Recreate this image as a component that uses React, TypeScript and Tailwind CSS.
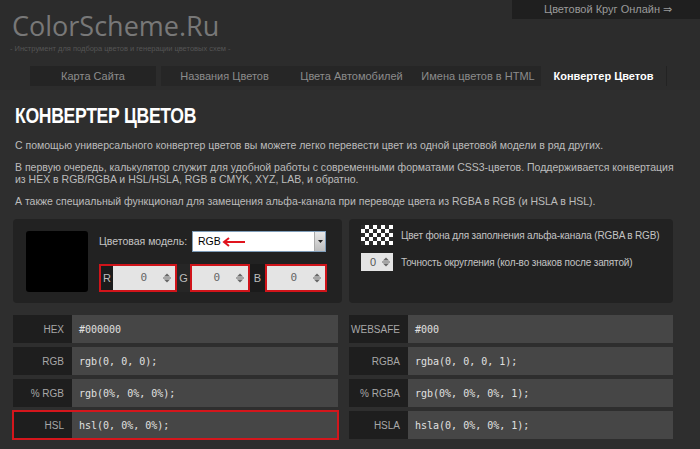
import React from "react";

const Spinner = () => (
  <svg width="8" height="10" viewBox="0 0 8 10" className="shrink-0">
    <path d="M1 3.5 L4 0.5 L7 3.5 Z" fill="#666" />
    <rect x="0" y="4.5" width="8" height="1" fill="#666" />
    <path d="M1 6.5 L4 9.5 L7 6.5 Z" fill="#666" />
  </svg>
);

const NumInput = ({ w = "w-[60px]" }: { w?: string }) => (
  <div className={`${w} h-full bg-[#e4e4e4] flex items-center justify-end pr-[4px] gap-[16px]`}>
    <span className="font-['DejaVu_Sans_Mono',monospace] text-[11px] text-[#666]">0</span>
    <Spinner />
  </div>
);

const rowsLeft = [
  { label: "HEX", value: "#000000" },
  { label: "RGB", value: "rgb(0, 0, 0);" },
  { label: "% RGB", value: "rgb(0%, 0%, 0%);" },
  { label: "HSL", value: "hsl(0, 0%, 0%);", marked: true },
];

const rowsRight = [
  { label: "WEBSAFE", value: "#000" },
  { label: "RGBA", value: "rgba(0, 0, 0, 1);" },
  { label: "% RGBA", value: "rgb(0%, 0%, 0%, 1);" },
  { label: "HSLA", value: "hsla(0, 0%, 0%, 1);" },
];

const ValueRow = ({ label, value, marked }: { label: string; value: string; marked?: boolean }) => (
  <div
    className={`flex h-[28px] ${marked ? "outline-2 outline-[#d4161c] -outline-offset-1" : ""}`}
  >
    <div className="w-[59px] bg-[#1e1e1e] flex items-center justify-end pr-[8px] text-[10px] text-[#a8a8a8]">
      {label}
    </div>
    <div className="flex-1 bg-[#464646] flex items-center pl-[7px] font-['DejaVu_Sans_Mono',monospace] text-[10px] text-[#e0e0e0]">
      {value}
    </div>
  </div>
);

export default function App() {
  return (
    <div className="w-[700px] h-[449px] overflow-hidden bg-[#2e2e2e] font-['Liberation_Sans',sans-serif] text-[#bcbcbc]">
      {/* header */}
      <div className="h-[90px] bg-[#2c2c2c] flex flex-col">
        <div className="flex justify-between items-start">
          <div className="pl-[12px] pt-[9px]">
            <div className="font-['Open_Sans',sans-serif] text-[27px] leading-[34px] text-[#787878]">
              ColorScheme.Ru
            </div>
            <div className="text-[7.5px] leading-[10px] text-[#555] -ml-[2px] mt-[1px] whitespace-nowrap">
              - Инструмент для подбора цветов и генерации цветовых схем -
            </div>
          </div>
          <div className="w-[188px] h-[19px] bg-[#1f1f1f] flex items-center pl-[32px] text-[11px] text-[#9a9a9a]">
            Цветовой Круг Онлайн ⇒
          </div>
        </div>
        <div className="flex mt-auto mb-[4px] ml-[30px] h-[20px] text-[11px] text-[#8c8c8c]">
          <div className="w-[126px] bg-[#242424] flex items-center justify-center">Карта Сайта</div>
          <div className="ml-[5px] flex bg-[#262626]">
            <div className="w-[127px] flex items-center justify-center">Названия Цветов</div>
            <div className="w-[127px] flex items-center justify-center">Цвета Автомобилей</div>
            <div className="w-[126px] flex items-center justify-center">Имена цветов в HTML</div>
          </div>
          <div className="w-[126px] border-r border-[#232323] flex items-center justify-center text-white font-bold">
            Конвертер Цветов
          </div>
        </div>
      </div>

      {/* content */}
      <div className="pl-[13px]">
        <h1 className="ml-[2px] mt-[16px] origin-left scale-x-[0.8] whitespace-nowrap font-bold text-[22px] leading-[20px] text-white tracking-[-0.4px]">
          КОНВЕРТЕР ЦВЕТОВ
        </h1>
        <div className="ml-[2px] mt-[13px] text-[10.5px] leading-[12.5px] space-y-[9px]">
          <p>С помощью универсального конвертер цветов вы можете легко перевести цвет из одной цветовой модели в ряд других.</p>
          <p>
            В первую очередь, калькулятор служит для удобной работы с современными форматами CSS3-цветов. Поддерживается конвертация
            <br />
            из HEX в RGB/RGBA и HSL/HSLA, RGB в CMYK, XYZ, LAB, и обратно.
          </p>
          <p>А также специальный функционал для замещения альфа-канала при переводе цвета из RGBA в RGB (и HSLA в HSL).</p>
        </div>

        {/* panels */}
        <div className="grid grid-cols-[329px_324px] gap-[7px] mt-[12px]">
          <div className="h-[84px] bg-[#222] rounded-[4px] flex pl-[13px] pt-[12px]">
            <div className="w-[62px] h-[61px] bg-black rounded-[3px]" />
            <div className="ml-[11px] flex flex-col">
              <div className="flex items-center h-[21px]">
                <span className="w-[93px] whitespace-nowrap text-[10.5px] text-[#c4c4c4]">Цветовая модель:</span>
                <div className="w-[134px] h-[21px] bg-white border border-[#7f9db9] flex items-center">
                  <span className="pl-[5px] text-[10.5px] text-black">RGB</span>
                  <svg width="24" height="10" viewBox="0 0 24 10" className="ml-[1px]">
                    <path d="M23 5 H3" stroke="#e0141e" strokeWidth="2" />
                    <path d="M7 1 L2 5 L7 9" stroke="#e0141e" strokeWidth="2" fill="none" />
                  </svg>
                  <div className="ml-auto w-[11px] h-full bg-gradient-to-b from-[#e8e8e8] to-[#bdbdbd] border-l border-[#aaa] flex items-center justify-center">
                    <svg width="5" height="3" viewBox="0 0 5 3">
                      <path d="M0 0 H5 L2.5 3 Z" fill="#222" />
                    </svg>
                  </div>
                </div>
              </div>
              <div className="flex h-[28px] mt-[12px] text-[11px] text-[#bdbdbd]">
                <div className="flex w-[78px] h-full border-2 border-[#d0141a]">
                  <div className="w-[12px] bg-[#1b1b1b] flex items-center justify-center">R</div>
                  <NumInput w="w-[62px]" />
                </div>
                <div className="w-[13px] bg-[#262626] flex items-center justify-center">G</div>
                <div className="w-[60px] h-full border-2 border-[#d0141a] flex">
                  <NumInput w="w-full" />
                </div>
                <div className="w-[15px] bg-[#1b1b1b] flex items-center justify-center">B</div>
                <div className="w-[62px] h-full border-2 border-[#d0141a] flex">
                  <NumInput w="w-full" />
                </div>
              </div>
            </div>
          </div>

          <div className="h-[84px] bg-[#222] rounded-[4px] pl-[12px] pt-[6px] text-[10px] tracking-[-0.15px] text-[#c4c4c4] whitespace-nowrap">
            <div className="flex items-center h-[20px]">
              <svg width="32" height="20" viewBox="0 0 32 20" className="shrink-0">
                <defs>
                  <pattern id="chk" width="8" height="8" patternUnits="userSpaceOnUse">
                    <rect width="8" height="8" fill="#ffffff" />
                    <rect width="4" height="4" fill="#2a2a2a" />
                    <rect x="4" y="4" width="4" height="4" fill="#2a2a2a" />
                  </pattern>
                </defs>
                <rect width="32" height="20" fill="url(#chk)" />
              </svg>
              <span className="ml-[8px]">Цвет фона для заполнения альфа-канала (RGBA в RGB)</span>
            </div>
            <div className="flex items-center h-[18px] mt-[8px]">
              <div className="w-[32px] h-[18px] bg-[#e4e4e4] flex items-center justify-end pr-[3px] gap-[6px]">
                <span className="text-[11px] text-[#555]">0</span>
                <Spinner />
              </div>
              <span className="ml-[8px]">Точность округления (кол-во знаков после запятой)</span>
            </div>
          </div>
        </div>

        {/* value tables */}
        <div className="grid grid-cols-[325px_324px] gap-[11px] mt-[12px]">
          <div className="flex flex-col gap-[4px]">
            {rowsLeft.map((r) => (
              <ValueRow key={r.label} {...r} />
            ))}
          </div>
          <div className="flex flex-col gap-[4px]">
            {rowsRight.map((r) => (
              <ValueRow key={r.label} {...r} />
            ))}
          </div>
        </div>
      </div>
    </div>
  );
}
